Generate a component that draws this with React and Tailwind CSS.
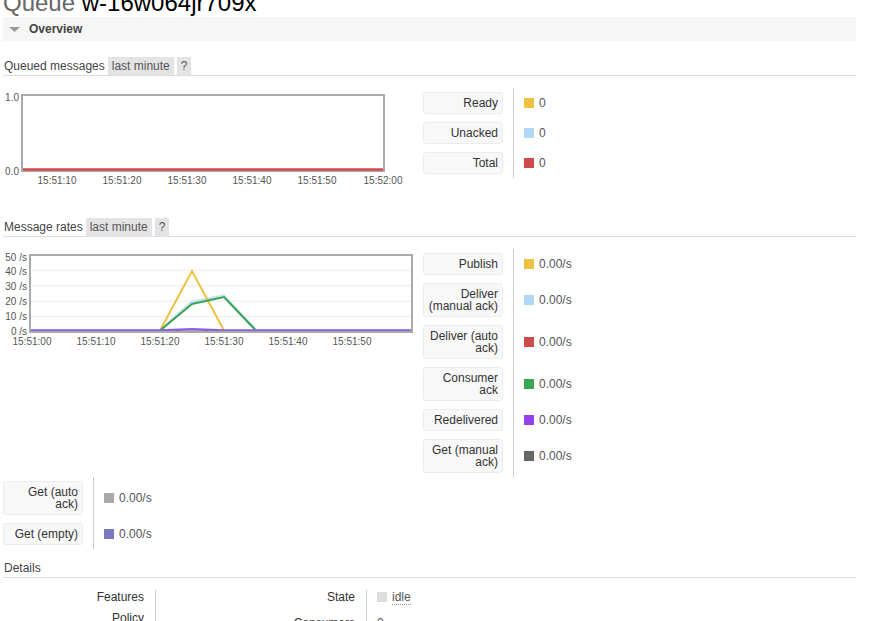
import React from "react";

const C = {
  yellow: "#edc240",
  blue: "#afd8f8",
  red: "#cf4a4b",
  green: "#3ba551",
  purple: "#9542e8",
  dark: "#666666",
  gray: "#aaaaaa",
  lav: "#7c79c3",
};

function Header({ title, pills }) {
  return (
    <div className="flex items-stretch border-b border-[#dddddd] h-[19px]">
      <span className="text-[12px] leading-[18px] text-[#444] pl-[1px] mr-[3px]">{title}</span>
      {pills &&
        pills.map((p) => (
          <span
            key={p}
            className="bg-[#e4e4e4] text-[12px] leading-[18px] text-[#555] px-[4px] mr-[3px]"
          >
            {p}
          </span>
        ))}
    </div>
  );
}

function Legend({ rows }) {
  return (
    <div className="flex flex-col">
      {rows.map((r, i) => (
        <div className="flex" key={i}>
          <div className="w-[80px] my-[4px] mr-[10px] border border-[#ececec] rounded-[3px] bg-[#f8f8f8] px-[4px] py-[4px] text-right text-[12px] leading-[12px] text-[#333] whitespace-nowrap">
            {r.label.map((l, j) => (
              <div key={j}>{l}</div>
            ))}
          </div>
          <div className="border-l border-[#cccccc] pl-[10px] flex items-center text-[12px] text-[#555]">
            <span className="w-[10px] h-[10px] mr-[5px] inline-block" style={{ background: r.color }} />
            <span>{r.value}</span>
          </div>
        </div>
      ))}
    </div>
  );
}

const F = { fontFamily: "'Liberation Sans', Arial, sans-serif", fontSize: 10, fill: "#555" };

function Chart1() {
  const xs = [
    [54, "15:51:10"],
    [119, "15:51:20"],
    [184, "15:51:30"],
    [249, "15:51:40"],
    [314, "15:51:50"],
    [380, "15:52:00"],
  ];
  return (
    <svg width="410" height="102" className="block">
      <rect x="19" y="7" width="362" height="76" fill="white" stroke="#aaaaaa" strokeWidth="2" />
      <line x1="20" y1="81.5" x2="380" y2="81.5" stroke={C.red} strokeWidth="2.5" />
      <text x="16" y="12.5" textAnchor="end" style={F}>1.0</text>
      <text x="16" y="86.5" textAnchor="end" style={F}>0.0</text>
      {xs.map(([x, t]) => (
        <text key={t} x={x} y="96" textAnchor="middle" style={F}>
          {t}
        </text>
      ))}
    </svg>
  );
}

function Chart2() {
  const xs = [
    [29, "15:51:00"],
    [93, "15:51:10"],
    [157, "15:51:20"],
    [221, "15:51:30"],
    [285, "15:51:40"],
    [349, "15:51:50"],
  ];
  const ys = [
    [12, "50 /s"],
    [26, "40 /s"],
    [41, "30 /s"],
    [56, "20 /s"],
    [71, "10 /s"],
    [86, "0 /s"],
  ];
  return (
    <svg width="410" height="100" className="block">
      <rect x="27" y="6" width="382" height="77" fill="white" />
      {[21.4, 36.8, 52.2, 67.6].map((y) => (
        <line key={y} x1="28" y1={y} x2="408" y2={y} stroke="#ebebeb" strokeWidth="1" />
      ))}
      <polyline
        points="28,81.5 157,81.5 189,53 221,47 253,81.5 408,81.5"
        fill="none"
        stroke="#c5e3f8"
        strokeWidth="3"
      />
      <polyline
        points="157,81.5 189,22 221,81.5"
        fill="none"
        stroke={C.yellow}
        strokeWidth="2"
      />
      <polyline
        points="157,81.5 189,55 221,48 253,81.5"
        fill="none"
        stroke={C.green}
        strokeWidth="2"
      />
      <polyline
        points="28,81.5 157,81.5 189,80.2 221,81.5 408,81.5"
        fill="none"
        stroke="#8a63dc"
        strokeWidth="2.5"
      />
      <rect x="27" y="6" width="382" height="77" fill="none" stroke="#aaaaaa" strokeWidth="2" />
      {ys.map(([y, t]) => (
        <text key={t} x="24" y={y} textAnchor="end" style={F}>
          {t}
        </text>
      ))}
      {xs.map(([x, t]) => (
        <text key={t} x={x} y="96" textAnchor="middle" style={F}>
          {t}
        </text>
      ))}
    </svg>
  );
}

function FactRow({ label, children, w, pb }) {
  return (
    <div className="flex">
      <div
        className="text-right text-[12px] leading-[14px] text-[#333] pr-[11px]"
        style={{ width: w, paddingBottom: pb }}
      >
        {label}
      </div>
      <div
        className="border-l border-[#cccccc] pl-[10px] text-[12px] leading-[14px] text-[#555] flex items-start"
        style={{ paddingBottom: pb }}
      >
        {children}
      </div>
    </div>
  );
}

export default function App() {
  return (
    <div
      className="bg-white min-h-[700px] overflow-hidden"
      style={{ fontFamily: "'Liberation Sans', Arial, sans-serif" }}
    >
      <div className="ml-[3px] w-[853px]">
        <h1 className="mt-[-11px] text-[24px] leading-[28px] font-normal text-black whitespace-nowrap">
          <span className="text-[#666]">Queue</span> w-16w064jr709x
        </h1>
        <div className="h-[24px] bg-[#f6f6f6] flex items-center">
          <svg width="12" height="7" className="ml-[6px] mr-[8px]">
            <polygon points="0,1 11,1 5.5,6" fill="#999999" />
          </svg>
          <span className="text-[12px] font-bold text-[#444]">Overview</span>
        </div>

        <div className="mt-[16px]">
          <Header title="Queued messages" pills={["last minute", "?"]} />
        </div>
        <div className="mt-[12px] flex h-[103px]">
          <div className="w-[420px]">
            <Chart1 />
          </div>
          <Legend
            rows={[
              { label: ["Ready"], color: C.yellow, value: "0" },
              { label: ["Unacked"], color: C.blue, value: "0" },
              { label: ["Total"], color: C.red, value: "0" },
            ]}
          />
        </div>

        <div className="mt-[27px]">
          <Header title="Message rates" pills={["last minute", "?"]} />
        </div>
        <div className="mt-[12px] flex">
          <div className="w-[420px]">
            <Chart2 />
          </div>
          <Legend
            rows={[
              { label: ["Publish"], color: C.yellow, value: "0.00/s" },
              { label: ["Deliver", "(manual ack)"], color: C.blue, value: "0.00/s" },
              { label: ["Deliver (auto", "ack)"], color: C.red, value: "0.00/s" },
              { label: ["Consumer", "ack"], color: C.green, value: "0.00/s" },
              { label: ["Redelivered"], color: C.purple, value: "0.00/s" },
              { label: ["Get (manual", "ack)"], color: C.dark, value: "0.00/s" },
            ]}
          />
        </div>
        <Legend
          rows={[
            { label: ["Get (auto", "ack)"], color: C.gray, value: "0.00/s" },
            { label: ["Get (empty)"], color: C.lav, value: "0.00/s" },
          ]}
        />

        <div className="mt-[10px]">
          <Header title="Details" />
        </div>
        <div className="mt-[12px] flex">
          <div className="flex flex-col">
            <FactRow label="Features" w={152} pb={7} />
            <FactRow label="Policy" w={152} pb={7} />
          </div>
          <div className="flex flex-col">
            <FactRow label="State" w={200} pb={11}>
              <span className="w-[10px] h-[10px] bg-[#dddddd] inline-block mr-[5px] mt-[2px]" />
              <span className="border-b border-dotted border-[#999]">idle</span>
            </FactRow>
            <FactRow label="Consumers" w={200} pb={11}>
              0
            </FactRow>
            <FactRow label="Consumer utilisation" w={200} pb={11}>
              0%
            </FactRow>
          </div>
        </div>
      </div>
    </div>
  );
}
